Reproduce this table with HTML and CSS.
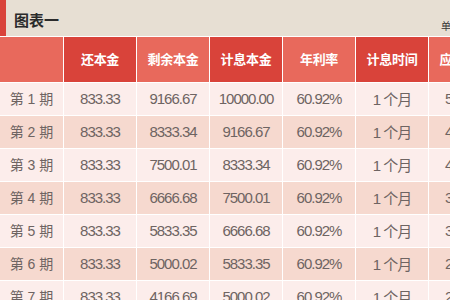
FILE: index.html
```html
<!DOCTYPE html>
<html lang="zh-CN">
<head>
  <meta charset="UTF-8">
  <title>图表一</title>
  <link rel="stylesheet" href="styles.css">
</head>
<body>
  <div class="chart">
    <!-- Title bar -->
    <div class="title-bar">
      <span class="title">图表一</span>
      <span class="unit">单位：元</span>
    </div>

    <!-- Repayment table -->
    <table class="plan">
      <colgroup>
        <col class="c-first">
        <col><col><col><col><col><col>
      </colgroup>
      <thead>
        <tr>
          <th class="light"></th>
          <th class="dark">还本金</th>
          <th class="light">剩余本金</th>
          <th class="dark">计息本金</th>
          <th class="light">年利率</th>
          <th class="dark">计息时间</th>
          <th class="light">应还利息</th>
        </tr>
      </thead>
      <tbody>
        <tr>
          <td>第 1 期</td><td>833.33</td><td>9166.67</td><td>10000.00</td><td>60.92%</td><td>1 个月</td><td>507.67</td>
        </tr>
        <tr>
          <td>第 2 期</td><td>833.33</td><td>8333.34</td><td>9166.67</td><td>60.92%</td><td>1 个月</td><td>465.36</td>
        </tr>
        <tr>
          <td>第 3 期</td><td>833.33</td><td>7500.01</td><td>8333.34</td><td>60.92%</td><td>1 个月</td><td>423.06</td>
        </tr>
        <tr>
          <td>第 4 期</td><td>833.33</td><td>6666.68</td><td>7500.01</td><td>60.92%</td><td>1 个月</td><td>380.75</td>
        </tr>
        <tr>
          <td>第 5 期</td><td>833.33</td><td>5833.35</td><td>6666.68</td><td>60.92%</td><td>1 个月</td><td>338.45</td>
        </tr>
        <tr>
          <td>第 6 期</td><td>833.33</td><td>5000.02</td><td>5833.35</td><td>60.92%</td><td>1 个月</td><td>296.14</td>
        </tr>
        <tr>
          <td>第 7 期</td><td>833.33</td><td>4166.69</td><td>5000.02</td><td>60.92%</td><td>1 个月</td><td>253.83</td>
        </tr>
      </tbody>
    </table>
  </div>
</body>
</html>
```

FILE: styles.css
```css
* {
  margin: 0;
  padding: 0;
  box-sizing: border-box;
}

body {
  font-family: 'Liberation Sans', 'Noto Sans CJK SC', sans-serif;
  background-color: #ffffff;
  overflow: hidden;
}

.chart {
  width: 520px;
}

.title-bar {
  height: 36px;
  background-color: #e7dfd3;
  border-left: 6px solid #d9433a;
  display: flex;
  align-items: center;
  justify-content: space-between;
  padding-left: 8px;
}

.title {
  font-family: 'Noto Sans CJK SC', sans-serif;
  font-size: 15px;
  font-weight: bold;
  color: #2b2b2b;
  margin-top: 2px;
}

.unit {
  font-family: 'Noto Sans CJK SC', sans-serif;
  font-size: 10px;
  color: #333;
  margin-top: 14px;
  margin-right: 19px;
  width: 60px;
}

.plan {
  border-collapse: separate;
  border-spacing: 1px;
  margin-left: -1px;
  table-layout: fixed;
  width: 503px;
  background-color: #ffffff;
}

.plan col {
  width: 72px;
}

.plan col.c-first {
  width: 63px;
}

.plan th {
  height: 45px;
  color: #ffffff;
  font-family: 'Noto Sans CJK SC', sans-serif;
  font-size: 13px;
  font-weight: bold;
  text-align: center;
  letter-spacing: -0.3px;
  padding-bottom: 3px;
}

.plan th.light {
  background-color: #e8695c;
}

.plan th.dark {
  background-color: #d9433a;
}

.plan td {
  height: 32px;
  text-align: center;
  font-family: 'Liberation Sans', 'Noto Sans CJK SC', sans-serif;
  font-size: 15px;
  color: #6e6462;
  letter-spacing: -1px;
  background-color: #fcedeb;
  padding-bottom: 2px;
}

.plan td:first-child {
  letter-spacing: 0;
  font-size: 14px;
}

.plan tbody tr:nth-child(even) td {
  background-color: #f6d9cf;
}
```
